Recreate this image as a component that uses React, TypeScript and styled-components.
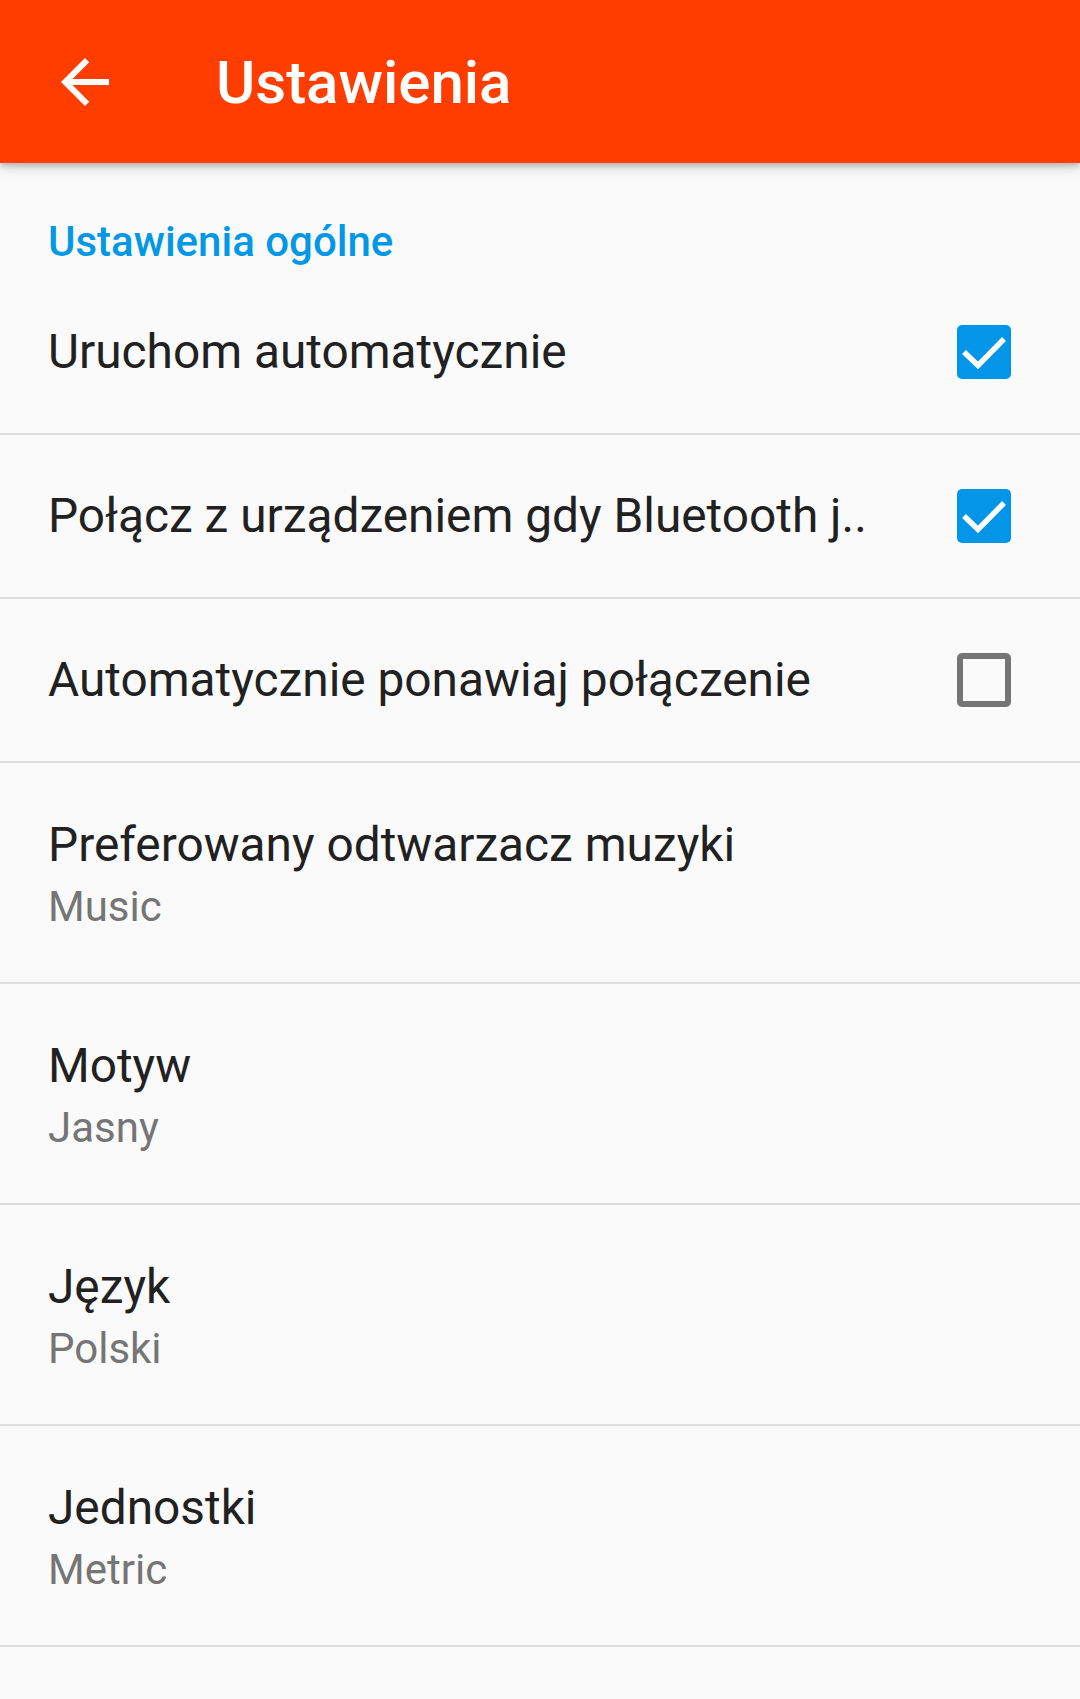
import React from "react";
import styled, { createGlobalStyle } from "styled-components";

const GlobalStyle = createGlobalStyle`
  html, body {
    margin: 0;
    padding: 0;
    background: #fafafa;
  }
  body {
    font-family: Roboto, "Noto Sans", "Liberation Sans", sans-serif;
    -webkit-font-smoothing: antialiased;
  }
  * { box-sizing: border-box; }
`;

const Page = styled.div`
  width: 1080px;
  min-height: 1699px;
  background: #fafafa;
  display: flex;
  flex-direction: column;
`;

const AppBar = styled.header`
  position: relative;
  z-index: 2;
  height: 163px;
  background: #ff3d00;
  display: flex;
  align-items: center;
  box-shadow: 0 3px 6px rgba(0, 0, 0, 0.22), 0 6px 14px rgba(0, 0, 0, 0.1);
`;

const BackButton = styled.button`
  width: 72px;
  height: 72px;
  margin-left: 49px;
  padding: 0;
  border: none;
  background: transparent;
  display: flex;
  align-items: center;
  justify-content: center;
  color: #fff;
`;

const Title = styled.h1`
  margin: 2px 0 0 95px;
  font-size: 60px;
  font-weight: 500;
  color: #ffffff;
  letter-spacing: 0;
`;

const List = styled.main`
  display: flex;
  flex-direction: column;
`;

const SectionHeader = styled.div`
  height: 108px;
  padding: 54px 0 0 48px;
  font-size: 42px;
  font-weight: 500;
  color: #0398e6;
`;

const CheckRow = styled.div`
  height: 164px;
  padding: 0 69px 0 48px;
  display: flex;
  align-items: center;
  justify-content: space-between;
  border-bottom: 2px solid #dddddd;
`;

const TwoLineRow = styled.div`
  height: 221px;
  padding: 54px 48px 0 48px;
  display: flex;
  flex-direction: column;
  border-bottom: 2px solid #dddddd;
`;

const RowTitle = styled.div`
  font-size: 47.8px;
  line-height: 56px;
  color: #212121;
  white-space: nowrap;
`;

const RowSummary = styled.div`
  margin-top: 9px;
  font-size: 42px;
  line-height: 49px;
  color: #757575;
`;

const Box = styled.div<{ $checked: boolean }>`
  width: 54px;
  height: 54px;
  flex: none;
  border-radius: 5px;
  background: ${(p) => (p.$checked ? "#0396e8" : "transparent")};
  border: ${(p) => (p.$checked ? "none" : "6px solid #757575")};
  display: flex;
  align-items: center;
  justify-content: center;
`;

const BackArrow = () => (
  <svg width="72" height="72" viewBox="0 0 24 24" fill="#ffffff">
    <path d="M20 11H7.83l5.59-5.59L12 4l-8 8 8 8 1.41-1.41L7.83 13H20v-2z" />
  </svg>
);

const Checkbox = ({ checked }: { checked: boolean }) => (
  <Box $checked={checked}>
    {checked && (
      <svg width="54" height="54" viewBox="0 0 54 54">
        <polyline
          points="7,27 21,40.5 47,14"
          fill="none"
          stroke="#ffffff"
          strokeWidth="5.5"
          strokeLinecap="butt"
          strokeLinejoin="miter"
        />
      </svg>
    )}
  </Box>
);

const checkItems = [
  { label: "Uruchom automatycznie", checked: true },
  { label: "Połącz z urządzeniem gdy Bluetooth j..", checked: true },
  { label: "Automatycznie ponawiaj połączenie", checked: false },
];

const valueItems = [
  { label: "Preferowany odtwarzacz muzyki", value: "Music" },
  { label: "Motyw", value: "Jasny" },
  { label: "Język", value: "Polski" },
  { label: "Jednostki", value: "Metric" },
];

export default function App() {
  return (
    <>
      <GlobalStyle />
      <Page>
        <AppBar>
          <BackButton aria-label="Wstecz">
            <BackArrow />
          </BackButton>
          <Title>Ustawienia</Title>
        </AppBar>
        <List>
          <SectionHeader>Ustawienia ogólne</SectionHeader>
          {checkItems.map((item) => (
            <CheckRow key={item.label}>
              <RowTitle>{item.label}</RowTitle>
              <Checkbox checked={item.checked} />
            </CheckRow>
          ))}
          {valueItems.map((item) => (
            <TwoLineRow key={item.label}>
              <RowTitle>{item.label}</RowTitle>
              <RowSummary>{item.value}</RowSummary>
            </TwoLineRow>
          ))}
        </List>
      </Page>
    </>
  );
}
